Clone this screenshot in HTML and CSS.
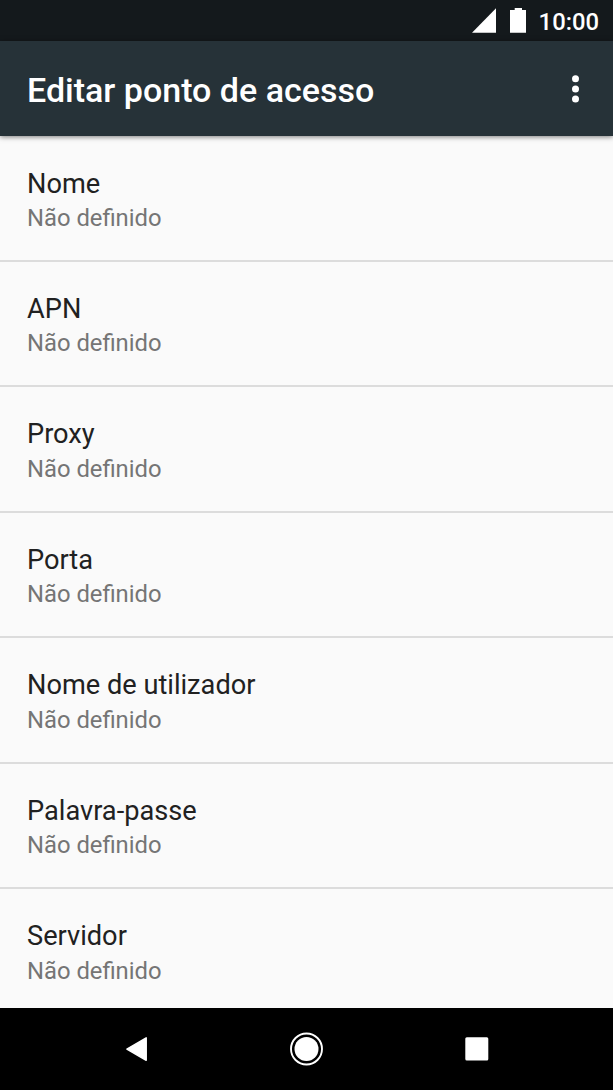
FILE: index.html
```html
<!DOCTYPE html>
<html lang="pt">
<head>
<meta charset="utf-8">
<title>Editar ponto de acesso</title>
<link rel="stylesheet" href="styles.css">
</head>
<body>
<div class="screen">
  <div class="status">
    <svg class="signal" width="24" height="25" viewBox="0 0 24 25"><path d="M24 .3V24.700H0z"/></svg>
    <svg class="battery" width="16" height="25" viewBox="0 0 16 25"><path d="M4.700 0h7.300v2H16v22.800H0V2h4.700z"/></svg>
    <span class="clock">10:00</span>
  </div>
  <header class="appbar">
    <h1 class="title">Editar ponto de acesso</h1>
    <svg class="more" width="8" height="28" viewBox="0 0 8 28"><circle cx="4.500" cy="3.700" r="3.500"/><circle cx="4.500" cy="13.900" r="3.500"/><circle cx="4.500" cy="24.100" r="3.500"/></svg>
  </header>
  <main class="list">
    <div class="item"><div class="name">Nome</div><div class="value">Não definido</div></div>
    <div class="item"><div class="name">APN</div><div class="value">Não definido</div></div>
    <div class="item"><div class="name">Proxy</div><div class="value">Não definido</div></div>
    <div class="item"><div class="name">Porta</div><div class="value">Não definido</div></div>
    <div class="item"><div class="name">Nome de utilizador</div><div class="value">Não definido</div></div>
    <div class="item"><div class="name">Palavra-passe</div><div class="value">Não definido</div></div>
    <div class="item"><div class="name">Servidor</div><div class="value">Não definido</div></div>
  </main>
  <nav class="navbar">
    <svg width="34" height="34" viewBox="0 0 34 34"><path d="M26.200 5.900V28.300L6.900 17.100z" stroke="#fff" stroke-width="1.500" stroke-linejoin="round"/></svg>
    <svg width="34" height="34" viewBox="0 0 34 34"><circle cx="16.500" cy="17" r="15.500" fill="none" stroke="#fff" stroke-width="1.900"/><circle cx="16.500" cy="17" r="12"/></svg>
    <svg width="34" height="34" viewBox="0 0 34 34"><rect x="6.300" y="5.300" width="23" height="23.200" rx="1.500"/></svg>
  </nav>
</div>
</body>
</html>
```
FILE: styles.css
```css
body { margin: 0; font-family: Roboto, sans-serif; }
svg { fill: #fff; display: block; flex: none; }
.screen { width: 613px; height: 1090px; display: flex; flex-direction: column; overflow: hidden; background: #fafafa; }
.status { height: 41px; flex: none; box-sizing: border-box; background: #14191c; display: flex; align-items: center; justify-content: flex-end; padding-right: 14px; color: #fff; }
.battery { margin: 0 13px 0 14px; }
.clock { font-size: 23.800px; font-weight: 500; line-height: 28px; padding-top: 2px; }
.appbar { height: 95px; flex: none; box-sizing: border-box; background: #263238; display: flex; align-items: center; justify-content: space-between; padding: 0 34px 0 27px; box-shadow: 0 1px 5px rgba(0,0,0,.5); z-index: 1; }
.title { margin: 0; padding-top: 2px; font-size: 34px; font-weight: 500; color: #fff; line-height: 40px; }
.list { flex: 1; min-height: 0; overflow: hidden; padding-top: .5px; }
.item { height: 125.450px; box-sizing: border-box; border-bottom: 2px solid #dcdcdc; padding: 31px 27px 0; }
.name { font-size: 27.200px; line-height: 33px; color: #212121; }
.value { font-size: 23.800px; line-height: 28px; margin-top: 3.500px; color: #757575; }
.navbar { height: 82px; flex: none; background: #000; display: flex; align-items: center; justify-content: space-between; padding: 0 120px; }
```
